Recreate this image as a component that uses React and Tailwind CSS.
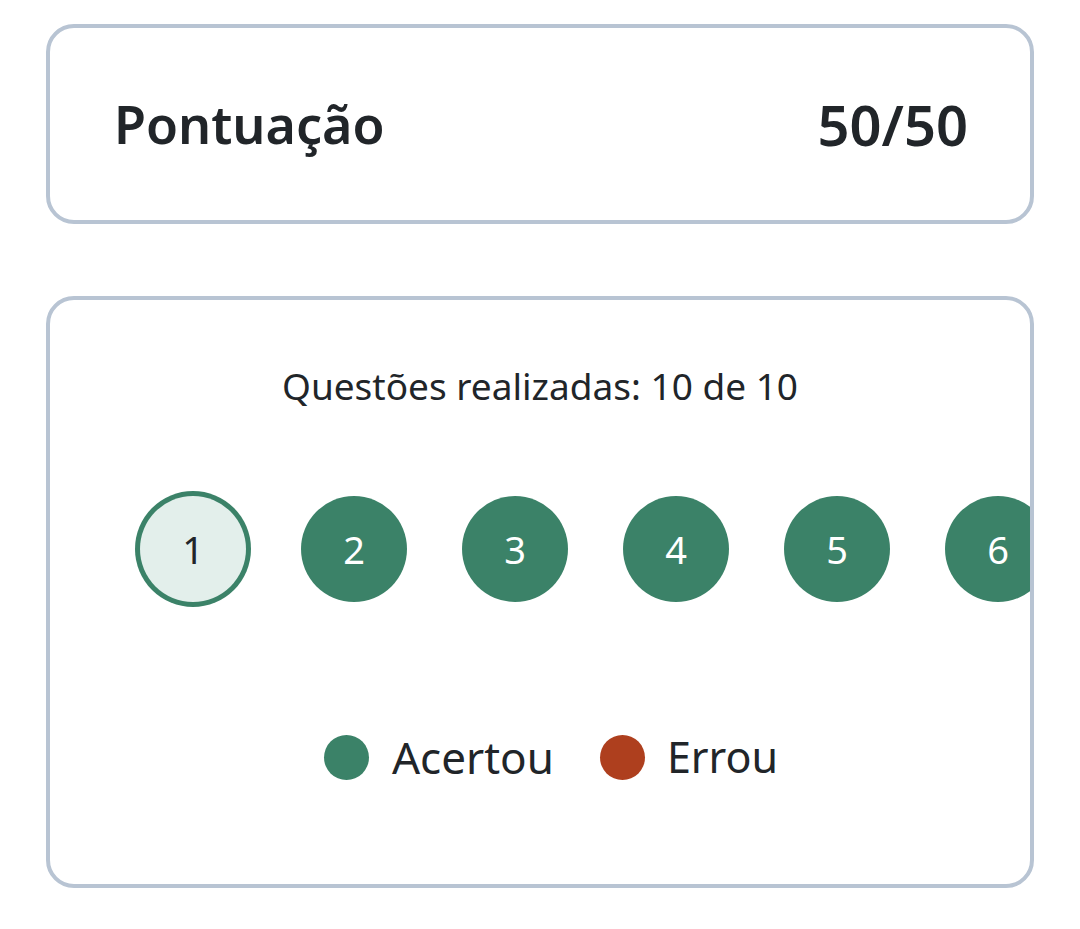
export default function App() {
  const nums = [1, 2, 3, 4, 5, 6];
  return (
    <div className="min-h-[929px] w-[1080px] bg-white px-[46px] pt-[24px] text-[#212529]" style={{ fontFamily: '"Noto Sans", sans-serif' }}>
      <div className="flex h-[200px] items-center justify-between rounded-[28px] border-[4px] border-[#b8c4d3] pl-[64px] pr-[62px]">
        <span className="text-[52px] font-semibold leading-none">Pontuação</span>
        <span className="text-[56px] font-semibold leading-none">50/50</span>
      </div>
      <div className="mt-[72px] flex h-[592px] flex-col overflow-hidden rounded-[28px] border-[4px] border-[#b8c4d3] pt-[65px]">
        <div className="text-center text-[37px] leading-[42px]">Questões realizadas: 10 de 10</div>
        <div className="mt-[89px] flex gap-[55px] pl-[90px]">
          {nums.map((n) =>
            n === 1 ? (
              <div key={n} className="flex h-[106px] w-[106px] shrink-0 items-center justify-center rounded-full bg-[#e3efeb] text-[38px] leading-none text-[#212529] ring-[5px] ring-[#3b8268]">
                {n}
              </div>
            ) : (
              <div key={n} className="flex h-[106px] w-[106px] shrink-0 items-center justify-center rounded-full bg-[#3b8268] text-[38px] leading-none text-white">
                {n}
              </div>
            )
          )}
        </div>
        <div className="mt-[131px] flex items-center justify-center pl-[22px]">
          <span className="h-[45px] w-[45px] rounded-full bg-[#3b8268]"></span>
          <span className="ml-[23px] text-[44px] leading-[48px]">Acertou</span>
          <span className="ml-[46px] h-[45px] w-[45px] rounded-full bg-[#ae3f1e]"></span>
          <span className="ml-[22px] text-[43px] leading-[48px]">Errou</span>
        </div>
      </div>
    </div>
  );
}
